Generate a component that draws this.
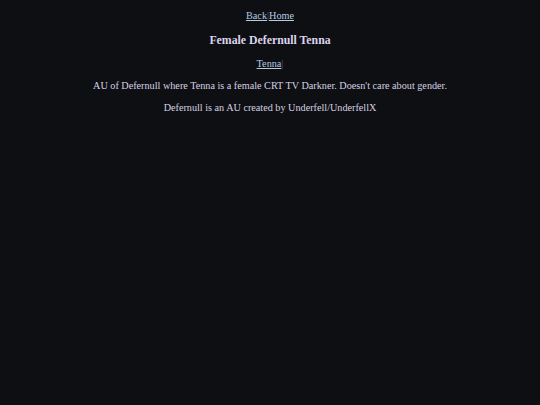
export default function App() {
  return (
    <div className="min-h-screen w-full bg-[#0e0f13] text-[#d6d0e2] text-center font-['Liberation_Serif',serif] text-[10.2px] leading-[12px] pt-[10px]">
      <div>
        <a href="#" className="underline text-[#b4cbe0]">Back</a>
        <span className="text-[#6a5a80]">|</span>
        <a href="#" className="underline text-[#b4cbe0]">Home</a>
      </div>
      <h2 className="font-bold text-[11.8px] leading-[14px] mt-[11px] text-[#dcd4ec]">Female Defernull Tenna</h2>
      <div className="mt-[11px]">
        <a href="#" className="underline text-[#b4cbe0]">Tenna</a>
        <span className="text-[#6a5a80]">|</span>
      </div>
      <p className="mt-[10px]">AU of Defernull where Tenna is a female CRT TV Darkner. Doesn't care about gender.</p>
      <p className="mt-[10px]">Defernull is an AU created by Underfell/UnderfellX</p>
    </div>
  );
}
